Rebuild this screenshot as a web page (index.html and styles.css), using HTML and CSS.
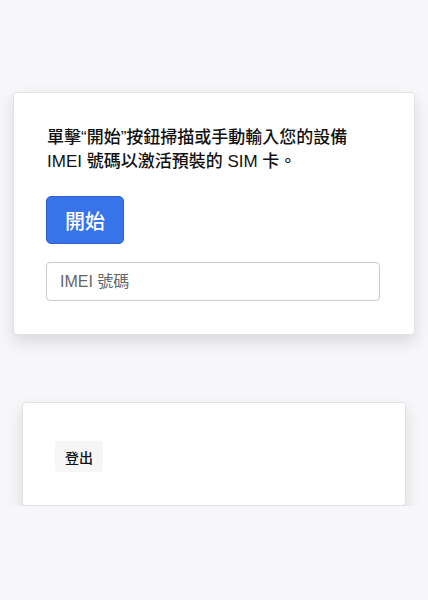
FILE: index.html
```html
<!DOCTYPE html>
<html lang="zh-Hant">
<head>
<meta charset="utf-8">
<link rel="stylesheet" href="styles.css">
</head>
<body>
<main class="page">
  <section class="card card-main">
    <p class="intro">單擊“開始”按鈕掃描或手動輸入您的設備 IMEI 號碼以激活預裝的 SIM 卡。</p>
    <button class="btn-start" type="button">開始</button>
    <input class="imei" type="text" placeholder="IMEI 號碼">
  </section>
  <section class="card card-logout">
    <button class="btn-logout" type="button">登出</button>
  </section>
</main>
</body>
</html>
```
FILE: styles.css
```css
html, body {
  margin: 0;
  padding: 0;
  background: #f7f7f9;
  font-family: "Liberation Sans", "Noto Sans CJK TC", sans-serif;
  color: #1a1a1a;
}
.page {
  padding-top: 92px;
  display: flex;
  flex-direction: column;
}
.card {
  background: #fff;
  border: 1px solid #e2e2e4;
  border-radius: 4px;
  box-shadow: 0 7px 16px rgba(0, 0, 0, 0.12);
  box-sizing: border-box;
}
.card-main {
  margin: 0 13px;
  width: 402px;
  padding: 33px 33px 33px 32px;
  display: flex;
  flex-direction: column;
  align-items: flex-start;
}
.intro {
  margin: 0 0 0 1px;
  font-size: 17px;
  font-weight: 500;
  line-height: 24px;
  width: 334px;
  color: #111;
}
.btn-start {
  margin-top: 22px;
  width: 78px;
  height: 48px;
  background: #3774e9;
  border: 1px solid #2e62c9;
  border-radius: 5px;
  color: #fff;
  font-family: inherit;
  font-size: 20px;
  font-weight: 500;
  padding: 0;
}
.imei {
  margin-top: 18px;
  width: 334px;
  height: 39px;
  box-sizing: border-box;
  border: 1px solid #cdcdd1;
  border-radius: 4px;
  padding: 0 13px;
  font-family: inherit;
  font-size: 16px;
  color: #333;
  outline: none;
}
.imei::placeholder {
  color: #666;
}
.card-logout {
  margin: 67px 22px 0 22px;
  width: 384px;
  height: 104px;
  padding: 38px 33px 0 32px;
}
.btn-logout {
  height: 31px;
  padding: 0 10px;
  background: #f6f6f7;
  border: none;
  border-radius: 3px;
  font-family: inherit;
  font-size: 14px;
  font-weight: 500;
  color: #111;
}
```
